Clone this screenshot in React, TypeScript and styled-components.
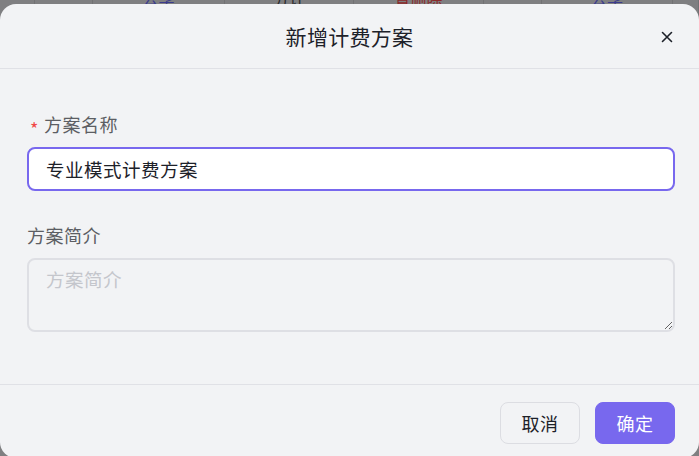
import React from 'react'
import styled, { createGlobalStyle } from 'styled-components'

const GlobalStyle = createGlobalStyle`
    html, body {
        margin: 0;
        padding: 0;
        width: 699px;
        height: 456px;
        overflow: hidden;
        font-family: "Noto Sans CJK SC", "Noto Sans", sans-serif;
    }
`

interface Cell {
    width: number;
    text?: string;
    tone?: 'blue' | 'dark' | 'red';
}

// table row that peeks out above the dialog, under the dark mask
const backdropCells: Cell[] = [
    { width: 35 },
    { width: 58 },
    { width: 132, text: '公享', tone: 'blue' },
    { width: 129, text: '分计', tone: 'dark' },
    { width: 130, text: '置删除', tone: 'red' },
    { width: 58 },
    { width: 131, text: '公享', tone: 'blue' },
    { width: 26 },
]

// dialog to create a new billing plan
const App: React.FC = () => {
    return (
        <>
            <GlobalStyle />
            <Page>
                <Backdrop>
                    {backdropCells.map((c, i) => (
                        <BackdropCell key={i} style={{ width: c.width }}>
                            {c.text && <BackdropText tone={c.tone}>{c.text}</BackdropText>}
                        </BackdropCell>
                    ))}
                </Backdrop>
                <Dialog>
                    <Header>
                        <Title>新增计费方案</Title>
                        <CloseButton aria-label="关闭">
                            <svg width="12" height="12" viewBox="0 0 12 12">
                                <path d="M1.5 1.5 L10.5 10.5 M10.5 1.5 L1.5 10.5" stroke="#1d2129" strokeWidth="1.6" strokeLinecap="round" />
                            </svg>
                        </CloseButton>
                    </Header>
                    <Body>
                        <Label>
                            <Required>*</Required>方案名称
                        </Label>
                        <TextInput type="text" defaultValue="专业模式计费方案" />
                        <Label spaced>方案简介</Label>
                        <TextArea placeholder="方案简介" />
                    </Body>
                    <Footer>
                        <Button>取消</Button>
                        <Button primary>确定</Button>
                    </Footer>
                </Dialog>
            </Page>
        </>
    )
}

export default App

const Page = styled.div`
    position: relative;
    width: 699px;
    height: 456px;
    overflow: hidden;
    background-color: #7f7f81;
`

const Backdrop = styled.div`
    position: absolute;
    top: 0;
    left: 0;
    right: 0;
    height: 20px;
    display: flex;
`

const BackdropCell = styled.div`
    flex-shrink: 0;
    height: 20px;
    border-right: 1px solid #727274;
    box-sizing: border-box;
    display: flex;
    justify-content: center;
    overflow: hidden;
`

const toneColors = {
    blue: '#3c3c8c',
    dark: '#2a2a2c',
    red: '#8a2a2a',
}

const BackdropText = styled.span<{ tone?: 'blue' | 'dark' | 'red' }>`
    margin-top: -12px;
    font-size: 16px;
    line-height: 20px;
    color: ${p => toneColors[p.tone || 'dark']};
`

const Dialog = styled.div`
    position: relative;
    margin-top: 4px;
    width: 699px;
    height: 454px;
    background-color: #f2f3f5;
    border-radius: 16px;
    display: flex;
    flex-direction: column;
`

const Header = styled.div`
    position: relative;
    height: 64px;
    flex-shrink: 0;
    border-bottom: 1px solid #e0e1e6;
    display: flex;
    align-items: center;
    justify-content: center;
`

const Title = styled.h2`
    margin: 0;
    font-size: 21px;
    font-weight: 400;
    color: #1d2129;
    letter-spacing: 0.3px;
`

const CloseButton = styled.button`
    position: absolute;
    right: 26px;
    top: 27px;
    width: 12px;
    height: 12px;
    padding: 0;
    border: none;
    background: none;
    display: flex;
`

const Body = styled.div`
    padding: 43px 24px 0 27px;
    display: flex;
    flex-direction: column;
    flex-grow: 1;
`

const Label = styled.label<{ spaced?: boolean }>`
    display: flex;
    align-items: center;
    height: 24px;
    margin-top: ${p => (p.spaced ? '32px' : '0')};
    margin-bottom: 11px;
    font-size: 18px;
    color: #5c5e63;
    letter-spacing: 0.5px;
`

const Required = styled.span`
    width: 17px;
    padding-left: 3px;
    box-sizing: border-box;
    padding-top: 7px;
    font-size: 18px;
    color: #f04848;
`

const TextInput = styled.input`
    height: 44px;
    box-sizing: border-box;
    padding: 0 17px;
    border: 2px solid #7868ee;
    border-radius: 8px;
    background-color: #fff;
    font-family: inherit;
    font-size: 18.5px;
    color: #1d2129;
    letter-spacing: 0.5px;
    outline: none;
`

const TextArea = styled.textarea`
    height: 74px;
    box-sizing: border-box;
    padding: 6px 17px;
    border: 2px solid #dedfe4;
    border-radius: 8px;
    background-color: #f2f3f5;
    font-family: inherit;
    font-size: 18.5px;
    color: #1d2129;
    letter-spacing: 0.5px;
    outline: none;
    resize: vertical;

    &::placeholder {
        color: #c4c6cc;
    }
`

const Footer = styled.div`
    height: 74px;
    flex-shrink: 0;
    box-sizing: border-box;
    border-top: 1px solid #e0e1e6;
    display: flex;
    justify-content: flex-end;
    align-items: flex-start;
    gap: 15px;
    padding: 17px 24px 0 0;
`

const Button = styled.button<{ primary?: boolean }>`
    width: 80px;
    height: 42px;
    box-sizing: border-box;
    border-radius: 8px;
    border: 1px solid ${p => (p.primary ? '#7868ee' : '#dcdde2')};
    background-color: ${p => (p.primary ? '#7868ee' : '#f2f3f5')};
    color: ${p => (p.primary ? '#fff' : '#1d2129')};
    font-family: inherit;
    font-size: 18px;
    letter-spacing: 0.5px;
    cursor: pointer;
`
